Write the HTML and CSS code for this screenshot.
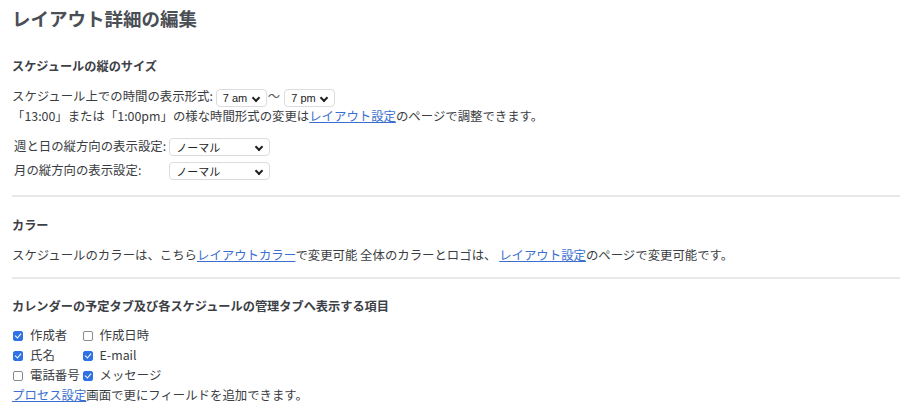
FILE: index.html
```html
<!DOCTYPE html>
<html lang="ja">
<head>
<meta charset="utf-8">
<link rel="stylesheet" href="styles.css">
</head>
<body>
<div class="page">
  <h1 class="title">レイアウト詳細の編集</h1>

  <section class="sec">
    <h2 class="sec-head">スケジュールの縦のサイズ</h2>
    <div class="line">スケジュール上での時間の表示形式:<span class="sel sel-time">7 am</span><span class="tilde">〜</span><span class="sel sel-time">7 pm</span></div>
    <div class="line">「13:00」または「1:00pm」の様な時間形式の変更は<a class="lnk" href="#">レイアウト設定</a>のページで調整できます。</div>
    <table class="opt-table">
      <tr><td>週と日の縦方向の表示設定:</td><td><span class="sel sel-wide">ノーマル</span></td></tr>
      <tr><td>月の縦方向の表示設定:</td><td><span class="sel sel-wide">ノーマル</span></td></tr>
    </table>
  </section>

  <section class="sec">
    <h2 class="sec-head">カラー</h2>
    <div class="line">スケジュールのカラーは、こちら<a class="lnk" href="#">レイアウトカラー</a>で変更可能 全体のカラーとロゴは、 <a class="lnk" href="#">レイアウト設定</a>のページで変更可能です。</div>
  </section>

  <section class="sec last">
    <h2 class="sec-head">カレンダーの予定タブ及び各スケジュールの管理タブへ表示する項目</h2>
    <table class="chk-table">
      <tr>
        <td><span class="cb on"></span>作成者</td>
        <td><span class="cb"></span>作成日時</td>
      </tr>
      <tr>
        <td><span class="cb on"></span>氏名</td>
        <td><span class="cb on"></span>E-mail</td>
      </tr>
      <tr>
        <td><span class="cb"></span>電話番号</td>
        <td><span class="cb on"></span>メッセージ</td>
      </tr>
    </table>
    <div class="line tail"><a class="lnk" href="#">プロセス設定</a>画面で更にフィールドを追加できます。</div>
  </section>
</div>
</body>
</html>
```

FILE: styles.css
```css
html, body {
  margin: 0;
  padding: 0;
  background: #fff;
}
body {
  font-family: "Noto Sans CJK JP", "Noto Sans", sans-serif;
  color: #3a3d42;
  font-size: 12.4px;
}
.page {
  padding: 6px 0 0 12px;
}
.title {
  margin: 0;
  font-size: 18.5px;
  line-height: 24px;
  font-weight: 700;
  color: #4a4e55;
}
.sec {
  border-bottom: 2px solid #e8e8ea;
  padding: 19px 0 13px;
}
.sec:first-of-type {
  padding-top: 27px;
}
.sec.last {
  border-bottom: none;
  padding-top: 18px;
}
.sec-head {
  margin: 0 0 12px;
  font-size: 12.2px;
  line-height: 18px;
  font-weight: 700;
  color: #3d4046;
}
.line {
  line-height: 18px;
  white-space: nowrap;
}
.lnk {
  color: #3a6fd0;
  text-decoration: underline;
}
.sel {
  display: inline-flex;
  align-items: center;
  box-sizing: border-box;
  height: 18px;
  padding: 0 4px 0 6px;
  border: 1px solid #dcdcdf;
  border-radius: 4px;
  background: #fff;
  font-family: "Liberation Sans", Arial, "Noto Sans CJK JP", sans-serif;
  font-size: 11px;
  color: #222;
  vertical-align: middle;
  position: relative;
}
.sel::after {
  content: "";
  position: absolute;
  right: 7px;
  top: 5px;
  width: 4px;
  height: 4px;
  border-right: 2px solid #222;
  border-bottom: 2px solid #222;
  transform: rotate(45deg);
}
.sel-time {
  width: 51px;
  margin-left: 3px;
}
.sel-wide {
  width: 101px;
  font-family: "Noto Sans CJK JP", sans-serif;
}
.tilde {
  display: inline-block;
  margin: 0 1px;
  color: #555;
}
.opt-table {
  border-collapse: collapse;
  margin-top: 10px;
}
.opt-table td {
  padding: 2px 2px;
  height: 19px;
  white-space: nowrap;
}
.opt-table td + td {
  padding-left: 1px;
}
.chk-table {
  border-collapse: collapse;
  margin-top: -2px;
}
.chk-table td {
  padding: 0 2px 0 1px;
  height: 20px;
  white-space: nowrap;
}
.cb {
  display: inline-block;
  box-sizing: border-box;
  width: 10px;
  height: 10px;
  margin-right: 7px;
  border: 1px solid #8a8a8f;
  border-radius: 2px;
  vertical-align: -1px;
  background: #fff;
  position: relative;
}
.cb.on {
  background: #2f72e6;
  border-color: #2f72e6;
}
.cb.on::after {
  content: "";
  position: absolute;
  left: 2px;
  top: 0px;
  width: 3px;
  height: 5px;
  border-right: 1.5px solid #fff;
  border-bottom: 1.5px solid #fff;
  transform: rotate(40deg);
}
.tail {
  line-height: 20px;
}
```
